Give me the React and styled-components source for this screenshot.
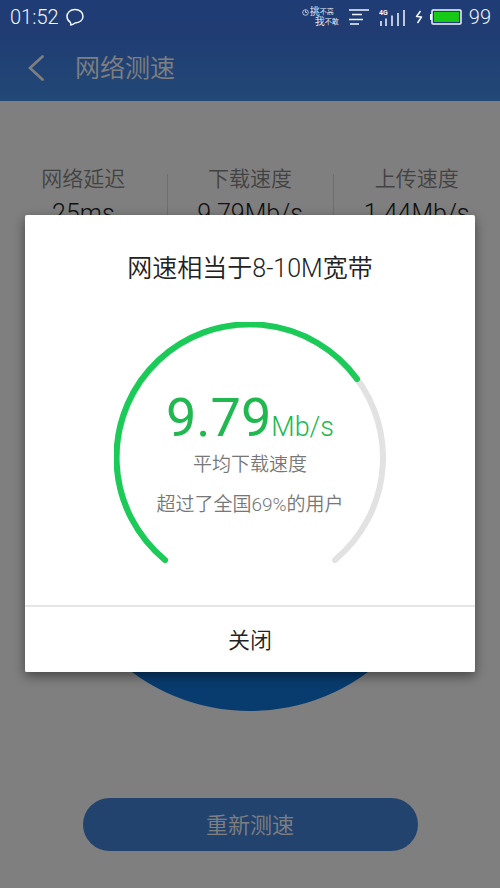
import React from "react";
import styled, { createGlobalStyle } from "styled-components";

const GlobalStyle = createGlobalStyle`
  * { box-sizing: border-box; }
  body {
    margin: 0;
    background: #fff;
    font-family: Roboto, "Noto Sans CJK SC", sans-serif;
    font-weight: 350;
  }
  button {
    font: inherit;
    border: 0;
    padding: 0;
    cursor: pointer;
  }
`;

const Screen = styled.div`
  position: relative;
  min-height: 100vh;
  display: flex;
  flex-direction: column;
  overflow: hidden;
`;

const Header = styled.header`
  display: flex;
  align-items: center;
  gap: 24px;
  padding: 37px 23px 0;
  height: 101px;
  background: linear-gradient(#4078ec 0%, #4078e6 30%, #4492ee 100%);
  color: #fff;
`;

const BackButton = styled.button`
  display: flex;
  background: none;
  color: inherit;
`;

const PageTitle = styled.h1`
  margin: 0;
  font-size: 25px;
  line-height: 32px;
  font-weight: 350;
`;

const Stats = styled.dl`
  display: grid;
  grid-template-columns: repeat(3, 1fr);
  margin: 64px 0 0;
`;

const Stat = styled.div`
  position: relative;
  display: flex;
  flex-direction: column;
  align-items: center;
  gap: 4px;

  & + &::before {
    content: "";
    position: absolute;
    left: 0;
    top: 9px;
    bottom: 4px;
    width: 1px;
    background: #dcdcdc;
  }
`;

const StatLabel = styled.dt`
  font-size: 21px;
  line-height: 28px;
  color: #858585;
`;

const StatValue = styled.dd`
  margin: 0;
  font-size: 25px;
  line-height: 34px;
  color: #222;
`;

const Dial = styled.div`
  width: 396px;
  height: 396px;
  margin: 84px auto 0;
  border-radius: 50%;
  background: #1078dc;
`;

const RetestButton = styled.button`
  width: 67%;
  height: 53px;
  margin: 87px auto 37px;
  padding-bottom: 3px;
  border-radius: 27px;
  background: #4686de;
  color: #fff;
  font-size: 22px;
`;

const Overlay = styled.div`
  position: absolute;
  inset: 0;
  display: grid;
  align-items: center;
  padding: 0 25px 1px;
  background: rgba(0, 0, 0, 0.5);
`;

const StatusBar = styled.div`
  position: absolute;
  top: 0;
  left: 0;
  right: 0;
  height: 34px;
  display: flex;
  align-items: center;
  justify-content: space-between;
  padding: 0 9px 0 10px;
  color: #f0f6ff;
  font-size: 20px;
`;

const StatusGroup = styled.div`
  display: flex;
  align-items: center;
  gap: ${(p) => p.$gap}px;
`;

const Ticker = styled.span`
  display: flex;
  align-items: center;
`;

const TickerLines = styled.span`
  display: flex;
  flex-direction: column;
`;

const TickerLine = styled.span`
  display: flex;
  align-items: center;
  padding-left: ${(p) => p.$indent}px;
  font-size: 10px;
  line-height: 10px;
`;

const TickerSmall = styled.small`
  font-size: 7px;
`;

const Dialog = styled.section`
  display: flex;
  flex-direction: column;
  background: #fff;
  border-radius: 2px;
  box-shadow: 0 4px 12px rgba(0, 0, 0, 0.45);
`;

const DialogTitle = styled.h2`
  margin: 36px 0 0;
  text-align: center;
  font-size: 25px;
  line-height: 36px;
  font-weight: 350;
  color: #222;
`;

const Gauge = styled.div`
  display: grid;
  justify-items: center;
  margin: 35px 0 39px;

  & > * {
    grid-area: 1 / 1;
  }
`;

const Readout = styled.div`
  display: flex;
  flex-direction: column;
  align-items: center;
  padding-top: 64px;
`;

const Speed = styled.p`
  margin: 0;
  color: #20b950;
  font-size: 54px;
  line-height: 64px;
  font-weight: 400;
`;

const Unit = styled.span`
  font-size: 27px;
  font-weight: 350;
`;

const Caption = styled.p`
  margin: ${(p) => p.$top}px 0 0;
  font-size: 19px;
  line-height: 28px;
  color: #777;
`;

const CloseButton = styled.button`
  height: 67px;
  padding-bottom: 3px;
  border-top: 2px solid #e6e6e6;
  border-radius: 0 0 2px 2px;
  background: #fff;
  color: #222;
  font-size: 22px;
`;

const stats = [
  { label: "网络延迟", value: "25ms" },
  { label: "下载速度", value: "9.79Mb/s" },
  { label: "上传速度", value: "1.44Mb/s" },
];

const BackIcon = () => (
  <svg width="28" height="28" viewBox="0 0 28 28" fill="none" stroke="currentColor" strokeWidth="2.6" strokeLinecap="round" aria-hidden="true">
    <path d="M19.500 1.500 7 13 19.500 24.500" />
  </svg>
);

const ChatIcon = () => (
  <svg width="18" height="18" viewBox="0 0 18 18" fill="none" stroke="currentColor" strokeWidth="1.5" strokeLinejoin="round" aria-hidden="true">
    <path d="M4 14C2 12.700 1 10.800 1 8.500 1 4.400 4.400 1.500 9 1.500s8 2.900 8 6.700-3.300 6.800-8 6.800c-1.200 1-2.700 1.800-4.300 2 .3-1 .2-2-.7-3Z" />
  </svg>
);

const ClockIcon = () => (
  <svg width="8" height="18" viewBox="0 0 8 18" fill="none" stroke="currentColor" strokeWidth="0.7" aria-hidden="true">
    <circle cx="3.500" cy="4.500" r="2.800" />
    <path d="M3.500 2.500v2h1.500" />
  </svg>
);

const LinesIcon = () => (
  <svg width="20" height="16" viewBox="0 0 20 16" stroke="currentColor" strokeWidth="1.500" aria-hidden="true">
    <path d="M0 1h20M3 5.500h10M0 10.500h14M1 15h9" />
  </svg>
);

const SignalIcon = () => (
  <svg width="26" height="17" viewBox="0 0 26 17" stroke="currentColor" strokeWidth="1.500" role="img" aria-label="4G">
    <path d="M2 12v5M7 9.500V17M13 6.500V17M19 4v13M25 1v16" />
    <text x="0" y="6" fill="currentColor" stroke="none" fontSize="7" fontWeight="700">4G</text>
  </svg>
);

const BoltIcon = () => (
  <svg width="8" height="14" viewBox="0 0 8 14" fill="none" stroke="currentColor" strokeWidth="1.500" strokeLinejoin="round" aria-hidden="true">
    <path d="M5.500 1 1.500 6.500l5 .5L2.500 13" />
  </svg>
);

const BatteryIcon = () => (
  <svg width="32" height="16" viewBox="0 0 32 16" aria-hidden="true">
    <path d="M0 5h2v6H0z" fill="currentColor" />
    <rect x="2" y="1" width="29" height="14" rx="1" fill="none" stroke="currentColor" strokeWidth="1.500" />
    <rect x="4" y="3" width="25" height="10" fill="#16c916" />
  </svg>
);

const GaugeArc = () => (
  <svg width="272" height="244" viewBox="0 0 272 244" fill="none" strokeWidth="6" strokeLinecap="round" aria-hidden="true">
    <path d="M51 238A133 133 0 1 1 221 238" stroke="#e2e2e2" />
    <path d="M51 238A133 133 0 1 1 243 57" stroke="#1bcb58" />
  </svg>
);

export default function App() {
  return (
    <Screen>
      <GlobalStyle />
      <Header>
        <BackButton aria-label="返回"><BackIcon /></BackButton>
        <PageTitle>网络测速</PageTitle>
      </Header>
      <Stats>
        {stats.map((s) => (
          <Stat key={s.label}>
            <StatLabel>{s.label}</StatLabel>
            <StatValue>{s.value}</StatValue>
          </Stat>
        ))}
      </Stats>
      <Dial />
      <RetestButton>重新测速</RetestButton>

      <Overlay>
        <StatusBar>
          <StatusGroup $gap={7}>
            <span>01:52</span>
            <ChatIcon />
          </StatusGroup>
          <StatusGroup $gap={10}>
            <Ticker>
              <ClockIcon />
              <TickerLines>
                <TickerLine $indent={0}>挑<TickerSmall>不高</TickerSmall></TickerLine>
                <TickerLine $indent={5}>我<TickerSmall>不敢</TickerSmall></TickerLine>
              </TickerLines>
            </Ticker>
            <LinesIcon />
            <SignalIcon />
            <StatusGroup $gap={7}>
              <BoltIcon />
              <BatteryIcon />
              <span>99</span>
            </StatusGroup>
          </StatusGroup>
        </StatusBar>
        <Dialog role="dialog" aria-modal="true" aria-labelledby="result-title">
          <DialogTitle id="result-title">网速相当于8-10M宽带</DialogTitle>
          <Gauge>
            <GaugeArc />
            <Readout>
              <Speed>9.79<Unit>Mb/s</Unit></Speed>
              <Caption $top={-8}>平均下载速度</Caption>
              <Caption $top={12}>超过了全国69%的用户</Caption>
            </Readout>
          </Gauge>
          <CloseButton>关闭</CloseButton>
        </Dialog>
      </Overlay>
    </Screen>
  );
}
